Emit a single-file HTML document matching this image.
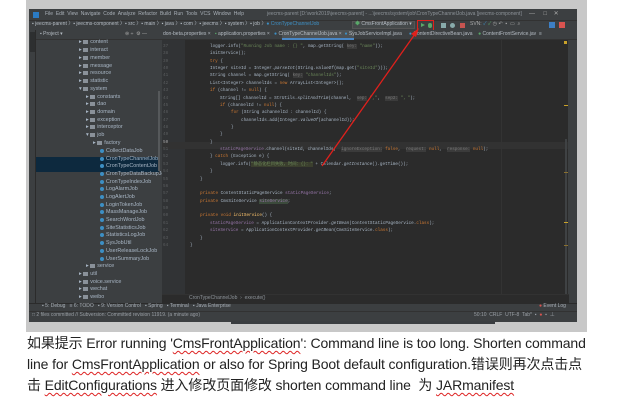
<!DOCTYPE html>
<html><head><meta charset="utf-8"><style>
*{margin:0;padding:0;box-sizing:border-box}
body{width:633px;height:412px;background:#fff;position:relative;overflow:hidden;font-family:"Liberation Sans","Noto Sans CJK SC",sans-serif}
.a{position:absolute;white-space:nowrap}
#gray{left:26px;top:0;width:561px;height:332px;background:#c8c8c8}
#win{left:29px;top:9px;width:548px;height:313px;background:#3c3f41;overflow:hidden}
.m{font-size:5px;color:#a9b0b8;line-height:11px}
.tree div{position:absolute;font-size:5.4px;color:#a9b7c6;white-space:nowrap;line-height:7px}
.fd{display:inline-block;width:5px;height:4px;background:#8a9199;margin-right:2px;vertical-align:-0.5px}
.ci{display:inline-block;width:4px;height:4px;border-radius:50%;background:#3d8fc4;margin-right:2px;vertical-align:-0.5px}
.code div{position:absolute;font-family:"Liberation Mono",monospace;font-size:4.3px;color:#a9b7c6;white-space:pre;line-height:7px}
.ln div{position:absolute;font-family:"Liberation Mono",monospace;font-size:4.3px;color:#5a5d5f;line-height:7px}
.k{color:#cc7832}.s{color:#6a8759}.f{color:#9876aa}.h{color:#787878;background:#3b3b3b}.y{color:#ffc66d}
.txt{position:absolute;left:27px;font-size:14px;color:#222;white-space:nowrap;letter-spacing:-0.12px;line-height:20px}
.w{text-decoration:underline wavy #d22;text-decoration-thickness:1px;text-underline-offset:2px}
</style></head><body>
<div class="a" id="gray"></div>
<div class="a" id="win">
 <div class="a" style="left:0;top:0;width:548px;height:11px;background:#3c3f41"></div>
 <div class="a" style="left:4px;top:3px;width:6px;height:6px;background:#2b7bc4"></div>
 <div class="a m" style="left:16px;top:0">File&nbsp; Edit&nbsp; View&nbsp; Navigate&nbsp; Code&nbsp; Analyze&nbsp; Refactor&nbsp; Build&nbsp; Run&nbsp; Tools&nbsp; VCS&nbsp; Window&nbsp; Help</div>
 <div class="a m" style="left:238px;top:0;color:#8d9399">jeecms-parent [D:\work2019\jeecms-parent] - ...\jeecms\system\job\CronTypeChannelJob.java [jeecms-component]</div>
 <div class="a m" style="left:500px;top:0;color:#aaa;font-size:6px">—&nbsp;&nbsp;&nbsp;&nbsp;&nbsp;□&nbsp;&nbsp;&nbsp;&nbsp;✕</div>
 <div class="a" style="left:0;top:11px;width:548px;height:10px;background:#3c3f41;border-top:1px solid #323232"></div>
 <div class="a m" style="left:3px;top:10px;color:#b5bcc4">▪ jeecms-parent 〉▪ jeecms-component 〉▪ src 〉▪ main 〉▪ java 〉▪ com 〉▪ jeecms 〉▪ system 〉▪ job 〉<span style="color:#3d8fc4">● CronTypeChannelJob</span></div>
 <div class="a" style="left:323px;top:12px;width:63px;height:8px;background:#45494a;border:1px solid #555"></div>
 <div class="a m" style="left:326px;top:10px;color:#b5bcc4"><span style="color:#59a869">◆</span> CmsFrontApplication ▾</div>
 <div class="a" style="left:388px;top:11px;width:17px;height:11px;border:1.3px solid #e0201c"></div>
 <div class="a" style="left:392px;top:14px;width:0;height:0;border-left:4px solid #59a869;border-top:2.5px solid transparent;border-bottom:2.5px solid transparent"></div>
 <div class="a" style="left:399px;top:14px;width:4px;height:5px;border-radius:2px;background:#59a869"></div>
 <div class="a" style="left:412px;top:14px;width:5px;height:5px;background:#8aa"></div>
 <div class="a" style="left:421px;top:14px;width:5px;height:5px;border-radius:50%;background:#8aa"></div>
 <div class="a" style="left:431px;top:14px;width:5px;height:5px;background:#c75450"></div>
 <div class="a m" style="left:441px;top:10px;color:#aaa">SVN: <span style="color:#3d8fc4">✓</span> <span style="color:#59a869">✓</span> ◷ ↶ &nbsp;▪ &nbsp;▭ &nbsp;⌕</div>
 <div class="a" style="left:520px;top:13px;width:6px;height:6px;background:#3d7fc4"></div>
 <div class="a" style="left:530px;top:13px;width:6px;height:6px;background:#d9534f"></div>
 <div class="a" style="left:0;top:21px;width:7px;height:280px;background:#3c3f41;border-right:1px solid #2b2b2b"></div>
 <div class="a" style="left:1px;top:23px;width:5px;height:20px;background:#2d2f30"></div>
 <div class="a" style="left:7px;top:21px;width:126px;height:10px;background:#3c3f41;border-bottom:1px solid #323232"></div>
 <div class="a m" style="left:11px;top:20px;color:#b5bcc4">▪ Project ▾</div>
 <div class="a m" style="left:96px;top:20px;color:#aaa">⊜ ÷ &nbsp;⚙ —</div>
 <div class="a" style="left:7px;top:31px;width:126px;height:270px;background:#3c3f41"></div>
 <div class="a" style="left:7px;top:148px;width:123px;height:15px;background:#0d293e"></div>
 <div class="a" style="left:129px;top:82px;width:2px;height:80px;background:#56595b"></div>
 <div class="tree" style="position:absolute;left:0;top:0">
  <div style="left:50px;top:30px">▸ <span class="fd"></span>content</div>
  <div style="left:50px;top:38px">▸ <span class="fd"></span>interact</div>
  <div style="left:50px;top:46px">▸ <span class="fd"></span>member</div>
  <div style="left:50px;top:54px">▸ <span class="fd"></span>message</div>
  <div style="left:50px;top:61px">▸ <span class="fd"></span>resource</div>
  <div style="left:50px;top:69px">▸ <span class="fd"></span>statistic</div>
  <div style="left:50px;top:77px">▾ <span class="fd"></span>system</div>
  <div style="left:57px;top:85px">▸ <span class="fd"></span>constants</div>
  <div style="left:57px;top:92px">▸ <span class="fd"></span>dao</div>
  <div style="left:57px;top:100px">▸ <span class="fd"></span>domain</div>
  <div style="left:57px;top:108px">▸ <span class="fd"></span>exception</div>
  <div style="left:57px;top:115px">▸ <span class="fd"></span>interceptor</div>
  <div style="left:57px;top:123px">▾ <span class="fd"></span>job</div>
  <div style="left:64px;top:131px">▸ <span class="fd"></span>factory</div>
  <div style="left:71px;top:139px"><span class="ci"></span>CollectDataJob</div>
  <div style="left:71px;top:147px"><span class="ci"></span>CronTypeChannelJob</div>
  <div style="left:71px;top:154px"><span class="ci"></span>CronTypeContentJob</div>
  <div style="left:71px;top:162px"><span class="ci"></span>CronTypeDataBackupJob</div>
  <div style="left:71px;top:170px"><span class="ci"></span>CronTypeIndexJob</div>
  <div style="left:71px;top:177px"><span class="ci"></span>LogAlarmJob</div>
  <div style="left:71px;top:185px"><span class="ci"></span>LogAlertJob</div>
  <div style="left:71px;top:193px"><span class="ci"></span>LoginTokenJob</div>
  <div style="left:71px;top:200px"><span class="ci"></span>MassManageJob</div>
  <div style="left:71px;top:208px"><span class="ci"></span>SearchWordJob</div>
  <div style="left:71px;top:216px"><span class="ci"></span>SiteStatisticsJob</div>
  <div style="left:71px;top:223px"><span class="ci"></span>StatisticsLogJob</div>
  <div style="left:71px;top:231px"><span class="ci"></span>SysJobUtil</div>
  <div style="left:71px;top:239px"><span class="ci"></span>UserReleaseLockJob</div>
  <div style="left:71px;top:247px"><span class="ci"></span>UserSummaryJob</div>
  <div style="left:57px;top:254px">▸ <span class="fd"></span>service</div>
  <div style="left:50px;top:262px">▸ <span class="fd"></span>util</div>
  <div style="left:50px;top:270px">▸ <span class="fd"></span>voice.service</div>
  <div style="left:50px;top:277px">▸ <span class="fd"></span>wechat</div>
  <div style="left:50px;top:285px">▸ <span class="fd"></span>weibo</div>
 </div>
 <div class="a" style="left:133px;top:21px;width:415px;height:10px;background:#3c3f41;border-bottom:1px solid #323232"></div>
 <div class="a" style="left:253px;top:21px;width:72px;height:10px;background:#4e5254;border-bottom:2px solid #4a88c7"></div>
 <div class="a m" style="left:134px;top:20px;color:#b5bcc4">don-beta.properties ×&nbsp;&nbsp;&nbsp;<span style="color:#59a869">▪</span> application.properties ×&nbsp;&nbsp;&nbsp;<span style="color:#3d8fc4">●</span> CronTypeChannelJob.java ×&nbsp;&nbsp;<span style="color:#3d8fc4">●</span> SysJobServiceImpl.java&nbsp;&nbsp;&nbsp;&nbsp;&nbsp;<span style="color:#3d8fc4">●</span> ContentDirectiveBean.java&nbsp;&nbsp;&nbsp;&nbsp;<span style="color:#59a869">●</span> ContentFrontService.jav&nbsp; ≡</div>
 <div class="a" style="left:133px;top:31px;width:23px;height:257px;background:#313335"></div>
 <div class="a" style="left:156px;top:31px;width:383px;height:257px;background:#2b2b2b"></div>
 <div class="a" style="left:133px;top:133px;width:406px;height:7px;background:#323232"></div>
 <div class="a" style="left:472px;top:31px;width:1px;height:257px;background:#333"></div>
 <div class="a" style="left:536px;top:130px;width:2px;height:158px;background:#3f4244"></div>
 <div class="a" style="left:535px;top:32px;width:3px;height:3px;background:#c9a22a"></div>
 <div class="a" style="left:535px;top:96px;width:4px;height:1px;background:#c9a22a"></div>
 <div class="a" style="left:535px;top:163px;width:4px;height:1px;background:#8a7030"></div>
 <div class="a" style="left:535px;top:213px;width:4px;height:1px;background:#c9a22a"></div>
 <div class="a" style="left:535px;top:236px;width:4px;height:1px;background:#8a7030"></div>
 <div class="a" style="left:540px;top:31px;width:8px;height:270px;background:#3c3f41"></div>
 <div class="ln" style="position:absolute;left:0;top:0">
  <div style="left:134px;top:34px">37</div><div style="left:134px;top:41px">38</div><div style="left:134px;top:49px">39</div><div style="left:134px;top:56px">40</div><div style="left:134px;top:63px">41</div><div style="left:134px;top:71px">42</div><div style="left:134px;top:78px">43</div><div style="left:134px;top:86px">44</div><div style="left:134px;top:93px">45</div><div style="left:134px;top:100px">46</div><div style="left:134px;top:108px">47</div><div style="left:134px;top:115px">48</div><div style="left:134px;top:122px">49</div><div style="left:134px;top:130px;color:#a4a3a3">50</div><div style="left:134px;top:137px">51</div><div style="left:134px;top:144px">52</div><div style="left:134px;top:152px">53</div><div style="left:134px;top:159px">54</div><div style="left:134px;top:167px">55</div><div style="left:134px;top:174px">56</div><div style="left:134px;top:181px">57</div><div style="left:134px;top:189px">58</div><div style="left:134px;top:196px">59</div><div style="left:134px;top:203px">60</div><div style="left:134px;top:211px">61</div><div style="left:134px;top:218px">62</div><div style="left:134px;top:226px">63</div><div style="left:134px;top:233px">64</div>
 </div>
 <div class="code" style="position:absolute;left:0;top:0">
  <div style="left:181px;top:34px">logger.info(<span class="s">"Running Job name : {} "</span>, map.getString( <span class="h">key:</span> <span class="s">"name"</span>));</div>
  <div style="left:181px;top:41px">initService();</div>
  <div style="left:181px;top:49px"><span class="k">try</span> {</div>
  <div style="left:181px;top:56px">Integer siteId = Integer.<i>parseInt</i>(String.<i>valueOf</i>(map.get(<span class="s">"siteId"</span>)));</div>
  <div style="left:181px;top:63px">String channel = map.getString( <span class="h">key:</span> <span class="s">"channelIds"</span>);</div>
  <div style="left:181px;top:71px">List&lt;Integer&gt; channelIds = <span class="k">new</span> ArrayList&lt;Integer&gt;();</div>
  <div style="left:181px;top:78px"><span class="k">if</span> (channel != <span class="k">null</span>) {</div>
  <div style="left:191px;top:86px">String[] channelId = StrUtils.<i>splitAndTrim</i>(channel,  <span class="h">sep:</span> <span class="s">","</span>,  <span class="h">sep2:</span> <span class="s">"，"</span>);</div>
  <div style="left:191px;top:93px"><span class="k">if</span> (channelId != <span class="k">null</span>) {</div>
  <div style="left:202px;top:100px"><span class="k">for</span> (String achannelId : channelId) {</div>
  <div style="left:212px;top:108px">channelIds.add(Integer.<i>valueOf</i>(achannelId));</div>
  <div style="left:202px;top:115px">}</div>
  <div style="left:191px;top:122px">}</div>
  <div style="left:181px;top:130px">}</div>
  <div style="left:191px;top:137px"><span class="f">staticPageService</span>.channel(siteId, channelIds,  <span class="h">ignoreException:</span> <span class="k">false</span>,  <span class="h">request:</span> <span class="k">null</span>,  <span class="h">response:</span> <span class="k">null</span>);</div>
  <div style="left:181px;top:144px">} <span class="k">catch</span> (Exception e) {</div>
  <div style="left:191px;top:152px">logger.info(<span class="s" style="background:#3b3f2e">"静态化栏目失败，时间：{}："</span> + Calendar.<i>getInstance</i>().getTime());</div>
  <div style="left:181px;top:159px">}</div>
  <div style="left:171px;top:167px">}</div>
  <div style="left:171px;top:181px"><span class="k">private</span> ContentStaticPageService <span class="f">staticPageService</span>;</div>
  <div style="left:171px;top:189px"><span class="k">private</span> CmsSiteService <span class="f" style="background:#3b4a3b">siteService</span>;</div>
  <div style="left:171px;top:203px"><span class="k">private void</span> <span class="y">initService</span>() {</div>
  <div style="left:181px;top:211px"><span class="f">staticPageService</span> = ApplicationContextProvider.<i>getBean</i>(ContentStaticPageService.<span class="k">class</span>);</div>
  <div style="left:181px;top:218px"><span class="f">siteService</span> = ApplicationContextProvider.<i>getBean</i>(CmsSiteService.<span class="k">class</span>);</div>
  <div style="left:171px;top:226px">}</div>
  <div style="left:161px;top:233px">}</div>
 </div>
 <div class="a" style="left:133px;top:285px;width:407px;height:9px;background:#2b2b2b;border-top:1px solid #323232"></div>
 <div class="a m" style="left:160px;top:284px;color:#8d9399">CronTypeChannelJob &nbsp;›&nbsp; execute()</div>
 <div class="a" style="left:0;top:294px;width:548px;height:8px;background:#3c3f41;border-top:1px solid #2b2b2b"></div>
 <div class="a m" style="left:13px;top:292px;color:#a9b0b8">▪ 5: Debug&nbsp;&nbsp;&nbsp;≡ 6: TODO&nbsp;&nbsp;&nbsp;▪ 9: Version Control&nbsp;&nbsp;&nbsp;▪ Spring&nbsp;&nbsp;&nbsp;▪ Terminal&nbsp;&nbsp;&nbsp;▪ Java Enterprise</div>
 <div class="a m" style="left:510px;top:292px;color:#a9b0b8"><span style="color:#d9534f">●</span> Event Log</div>
 <div class="a" style="left:0;top:302px;width:548px;height:11px;background:#3c3f41;border-top:1px solid #323232"></div>
 <div class="a m" style="left:3px;top:301px;color:#9a9fa5">□ 2 files committed // Subversion: Committed revision 11919. (a minute ago)</div>
 <div class="a m" style="left:445px;top:301px;color:#9a9fa5">50:10&nbsp; CRLF&nbsp; UTF-8&nbsp; Tab*&nbsp; ▪&nbsp; <span style="color:#d9534f">●</span>&nbsp; ▪&nbsp; ⊥</div>
</div>
<div class="a" style="left:231px;top:321px;width:264px;height:3px;background:#3a3d40"></div>
<svg class="a" style="left:0;top:0" width="633" height="412">
 <line x1="322" y1="166" x2="415" y2="34" stroke="#e0201c" stroke-width="1.3"/>
 <polygon points="419,28 411,34 416,37" fill="#e0201c"/>
</svg>
<div class="txt" style="top:333px">如果提示 Error running '<span class="w">CmsFrontApplication</span>': Command line is too long. Shorten command</div>
<div class="txt" style="top:354px">line for <span class="w">CmsFrontApplication</span> or also for Spring Boot default configuration.错误则再次点击点</div>
<div class="txt" style="top:375px">击 <span class="w">EditConfigurations</span> 进入修改页面修改 shorten command line&nbsp; 为 <span class="w">JARmanifest</span></div>
</body></html>
